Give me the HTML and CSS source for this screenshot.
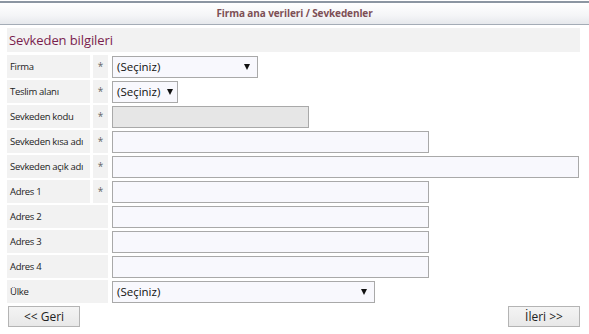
FILE: index.html
```html
<!DOCTYPE html>
<html lang="tr">
<head>
<meta charset="utf-8">
<link rel="stylesheet" href="styles.css">
</head>
<body>
<div class="header">Firma ana verileri / Sevkedenler</div>
<div class="page">
  <div class="section">Sevkeden bilgileri</div>
  <div class="form">
    <div class="label">Firma</div><div class="star">*</div>
    <div class="field"><div class="select w145"><span>(Seçiniz)</span><span class="arrow"></span></div></div>

    <div class="label">Teslim alanı</div><div class="star">*</div>
    <div class="field"><div class="select w65"><span>(Seçiniz)</span><span class="arrow"></span></div></div>

    <div class="label">Sevkeden kodu</div><div class="star">*</div>
    <div class="field"><div class="input disabled w196"></div></div>

    <div class="label">Sevkeden kısa adı</div><div class="star">*</div>
    <div class="field"><div class="input w316"></div></div>

    <div class="label">Sevkeden açık adı</div><div class="star">*</div>
    <div class="field"><div class="input w466"></div></div>

    <div class="label">Adres 1</div><div class="star">*</div>
    <div class="field"><div class="input w316"></div></div>

    <div class="label wide">Adres 2</div>
    <div class="field"><div class="input w316"></div></div>

    <div class="label wide">Adres 3</div>
    <div class="field"><div class="input w316"></div></div>

    <div class="label wide">Adres 4</div>
    <div class="field"><div class="input w316"></div></div>

    <div class="label wide">Ülke</div>
    <div class="field"><div class="select w262"><span>(Seçiniz)</span><span class="arrow"></span></div></div>
  </div>
  <div class="buttons">
    <div class="btn">&lt;&lt; Geri</div>
    <div class="btn">İleri &gt;&gt;</div>
  </div>
</div>
</body>
</html>
```
FILE: styles.css
```css
* { box-sizing: border-box; }
body {
  margin: 0;
  font-family: "Open Sans", "Noto Sans", sans-serif;
  background: #ffffff;
  color: #222;
}
.header {
  margin-top: 1px;
  height: 24px;
  border-top: 2px solid #8c96a2;
  border-bottom: 1px solid #a4acb6;
  background: linear-gradient(#ffffff, #f4f5f7 60%, #e6e8ec);
  text-align: center;
  font-size: 10px;
  font-weight: bold;
  letter-spacing: -0.1px;
  color: #7d4f55;
  line-height: 21px;
}
.page {
  padding: 0 9px 0 7px;
}
.section {
  margin-top: 3px;
  height: 24px;
  background: #f2f2f2;
  color: #7a1e4e;
  font-size: 13px;
  letter-spacing: -0.1px;
  line-height: 24px;
  padding-left: 2px;
}
.form {
  margin-top: 3px;
  display: grid;
  grid-template-columns: 83px 15px 1fr;
  column-gap: 3px;
  row-gap: 2px;
  grid-auto-rows: 23px;
}
.label {
  background: #f2f2f2;
  font-size: 9.5px;
  letter-spacing: -0.3px;
  line-height: 23px;
  padding-left: 3px;
  color: #222;
  white-space: nowrap;
}
.label.wide { grid-column: 1 / 3; }
.star {
  background: #f2f2f2;
  font-size: 10px;
  line-height: 23px;
  text-align: center;
  color: #666;
}
.field {
  display: flex;
  align-items: center;
  padding-left: 1px;
}
.input, .select {
  height: 22px;
  border: 1px solid #a9a9a9;
  background: #f8f8fd;
}
.input.disabled { background: #e6e6e6; }
.select {
  display: flex;
  align-items: center;
  justify-content: space-between;
  padding: 0 7px 0 4px;
  font-size: 11.5px;
  color: #111;
}
.select.w65 { padding-right: 4px; }
.arrow {
  width: 0;
  height: 0;
  border-left: 3.5px solid transparent;
  border-right: 3.5px solid transparent;
  border-top: 6px solid #111;
}
.w65 { width: 66px; }
.w145 { width: 146px; }
.w196 { width: 197px; }
.w262 { width: 263px; }
.w316 { width: 317px; }
.w466 { width: 467px; }
.buttons {
  margin-top: 3px;
  display: flex;
  justify-content: space-between;
  padding-left: 1px;
}
.btn {
  width: 72px;
  height: 21px;
  border: 1px solid #b4b4b4;
  background: linear-gradient(#f4f4f4, #e8e8e8);
  font-size: 12px;
  line-height: 19px;
  text-align: center;
  color: #222;
}
```
